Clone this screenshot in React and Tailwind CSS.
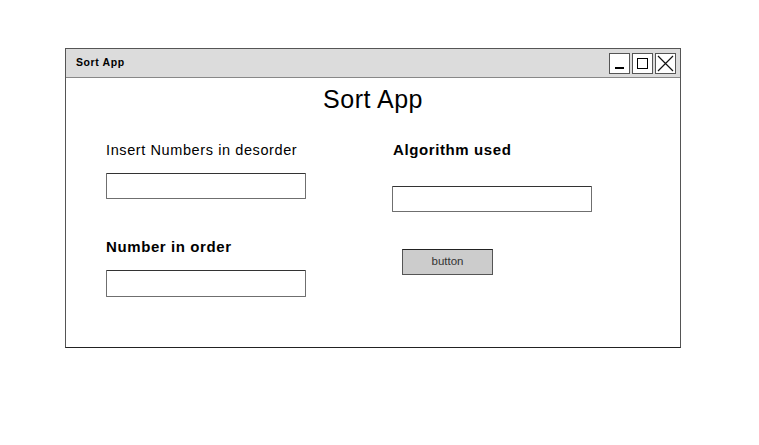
import React from 'react';

const font = { fontFamily: '"Comic Sans MS", "Liberation Sans", sans-serif' };

const Field = ({ w = 'w-[200px]', h = 'h-[26px]' }) => (
  <div className={`${w} ${h} border border-[#6f6f6f] border-t-[#333] bg-white rounded-[1px]`}></div>
);

const WinButton = ({ children }) => (
  <div className="w-[21px] h-[21px] border border-[#555] bg-white flex items-center justify-center">
    {children}
  </div>
);

export default function App() {
  return (
    <div className="w-[759px] h-[445px] bg-white pl-[65px] pt-[48px]" style={font}>
      <div className="w-[616px] h-[300px] border border-[#555] border-b-[#222] flex flex-col">
        {/* title bar */}
        <div className="h-[29px] bg-[#dcdcdc] border-b border-[#888] flex items-center justify-between pl-[10px] pr-[4px]">
          <span className="text-[10.5px] font-bold text-black tracking-[0.6px]">Sort App</span>
          <div className="flex gap-[2px]">
            <WinButton>
              <div className="w-[9px] h-[1.5px] bg-black mt-[10px]"></div>
            </WinButton>
            <WinButton>
              <div className="w-[11px] h-[11px] border border-black"></div>
            </WinButton>
            <WinButton>
              <svg width="17" height="17" viewBox="0 0 17 17">
                <path d="M1 1 L16 16 M16 1 L1 16" stroke="#111" strokeWidth="1.2" />
              </svg>
            </WinButton>
          </div>
        </div>

        {/* heading */}
        <div className="text-center text-[25px] text-black mt-[3px] leading-[36px] tracking-[0.5px]">Sort App</div>

        <div className="flex mt-[23px]">
          {/* left column */}
          <div className="pl-[40px] w-[326px] flex flex-col">
            <div className="text-[14.5px] text-black leading-[20px] tracking-[0.6px]">Insert Numbers in desorder</div>
            <div className="mt-[13px]">
              <Field />
            </div>
            <div className="mt-[38px] text-[15px] font-bold text-black leading-[20px] tracking-[0.6px]">Number in order</div>
            <div className="mt-[13px]">
              <Field h="h-[27px]" />
            </div>
          </div>

          {/* right column */}
          <div className="flex flex-col">
            <div className="text-[15px] font-bold text-black leading-[20px] tracking-[0.6px] pl-[1px]">Algorithm used</div>
            <div className="mt-[26px]">
              <Field />
            </div>
            <div className="mt-[37px] ml-[10px] w-[91px] h-[26px] bg-[#cccccc] border border-[#555] border-t-[#222] flex items-center justify-center text-[11.5px] text-[#333]">
              button
            </div>
          </div>
        </div>
      </div>
    </div>
  );
}
